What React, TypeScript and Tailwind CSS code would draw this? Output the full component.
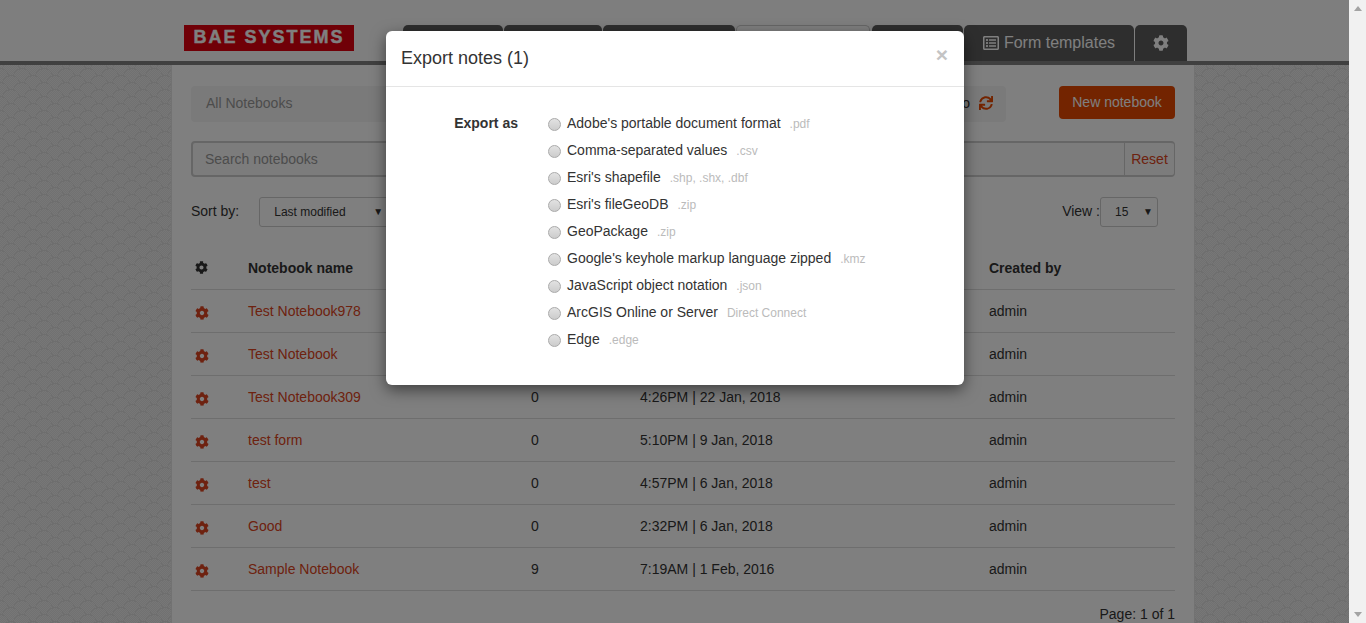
import { FaCog, FaSync, FaRegListAlt } from 'react-icons/fa'

const FORMATS = [
  { label: "Adobe's portable document format", ext: '.pdf' },
  { label: 'Comma-separated values', ext: '.csv' },
  { label: "Esri's shapefile", ext: '.shp, .shx, .dbf' },
  { label: "Esri's fileGeoDB", ext: '.zip' },
  { label: 'GeoPackage', ext: '.zip' },
  { label: "Google's keyhole markup language zipped", ext: '.kmz' },
  { label: 'JavaScript object notation', ext: '.json' },
  { label: 'ArcGIS Online or Server', ext: 'Direct Connect' },
  { label: 'Edge', ext: '.edge' },
]

const NOTEBOOKS = [
  { name: 'Test Notebook978', count: '', date: '' },
  { name: 'Test Notebook', count: '', date: '' },
  { name: 'Test Notebook309', count: '0', date: '4:26PM | 22 Jan, 2018' },
  { name: 'test form', count: '0', date: '5:10PM | 9 Jan, 2018' },
  { name: 'test', count: '0', date: '4:57PM | 6 Jan, 2018' },
  { name: 'Good', count: '0', date: '2:32PM | 6 Jan, 2018' },
  { name: 'Sample Notebook', count: '9', date: '7:19AM | 1 Feb, 2016' },
]

const TABS = ['w-[100px]', 'w-[98px]', 'w-[132px]']

function Select({ label, cls }: { label: string; cls: string }) {
  return (
    <div className={`flex h-[30px] items-center justify-between rounded-[3px] border border-[#ccc] pl-[14px] text-xs text-[#333] ${cls}`}>
      <span>{label}</span>
      <span className="text-[10px]">▼</span>
    </div>
  )
}

export default function App() {
  return (
    <div className="relative flex h-[623px] overflow-hidden font-['Liberation_Sans',Arial,sans-serif] text-sm text-[#333]">
      <div className="relative h-[623px] w-[1349px] overflow-hidden bg-[#e9e9e9] bg-[radial-gradient(circle_at_50%_100%,transparent_8px,#dcdcdc_8px,#dcdcdc_9px,transparent_9px),radial-gradient(circle_at_50%_100%,transparent_8px,#dcdcdc_8px,#dcdcdc_9px,transparent_9px),repeating-conic-gradient(#e2e2e2_0_25%,#eeeeee_0_50%)] bg-[length:22px_14px,22px_14px,2px_2px] bg-[position:0_0,11px_7px,0_0]">
        <header className="flex h-[65px] items-end border-b-4 border-[#808080] bg-[#fcfcfc] pl-[184px]">
          <div className="mb-[10px] flex h-[26px] w-[170px] items-center justify-center bg-[#e1000f] text-[18px] font-bold tracking-[2px] text-white [-webkit-text-stroke:0.4px_white]">BAE SYSTEMS</div>
          <nav className="ml-[49px] flex h-[36px] gap-[1px]">
            {TABS.map((w) => (
              <div key={w} className={`rounded-t-[5px] bg-[#5c5c5c] ${w}`} />
            ))}
            <div className="mr-[1px] w-[134px] rounded-t-[5px] border border-b-0 border-[#ccc] bg-white" />
            <div className="w-[91px] rounded-t-[5px] bg-[#5c5c5c]" />
            <div className="flex w-[170px] items-center justify-center gap-[5px] rounded-t-[5px] bg-[#5c5c5c] text-base text-white">
              <FaRegListAlt className="h-[16px] w-[16px]" />
              Form templates
            </div>
            <div className="flex w-[52px] items-center justify-center rounded-t-[5px] bg-[#5c5c5c] text-white">
              <FaCog className="h-[16px] w-[16px]" />
            </div>
          </nav>
        </header>

        <main className="ml-[171px] h-[558px] w-[1024px] border-x border-[#e4e4e4] bg-white px-[19px] pt-[21px]">
          <div className="flex items-start justify-between">
            <div className="flex h-[36px] w-[815px] items-center justify-between rounded-[4px] bg-[#f5f5f5] pb-[2px] pl-[15px] pr-[13px]">
              <span className="text-[#999]">All Notebooks</span>
              <span className="flex items-center gap-[9px]">
                <span>ago</span>
                <FaSync className="h-[14px] w-[14px] text-[#e64800]" />
              </span>
            </div>
            <button className="h-[33px] w-[116px] rounded-[4px] bg-[#e64800] pb-[2px] text-white">New notebook</button>
          </div>

          <div className="mt-[19px] flex h-[36px] items-stretch rounded-[4px] border-2 border-[#ccc] border-r-1 bg-[#f8f8f8]">
            <div className="flex flex-1 items-center pl-[12px] text-[#999]">Search notebooks</div>
            <div className="flex w-[50px] items-center justify-center border-l border-[#ccc] text-[#dc4420]">Reset</div>
          </div>

          <div className="mt-[20px] flex items-center">
            <span className="mb-[2px]">Sort by:</span>
            <Select label="Last modified" cls="ml-[20px] w-[136px] pr-[11px]" />
            <span className="mb-[2px] ml-auto">View :</span>
            <Select label="15" cls="mr-[17px] w-[58px] pr-[4px]" />
          </div>

          <table className="mt-[20px] w-full table-fixed border-collapse">
            <thead>
              <tr className="h-[42px] border-b border-[#ddd] text-left font-bold">
                <th className="w-[57px] pl-[4px]"><FaCog className="h-[13px] w-[13px] text-[#333]" /></th>
                <th className="w-[283px]">Notebook name</th>
                <th className="w-[109px]" />
                <th className="w-[349px]" />
                <th>Created by</th>
              </tr>
            </thead>
            <tbody>
              {NOTEBOOKS.map((n) => (
                <tr key={n.name} className="h-[43px] border-b border-[#ddd]">
                  <td className="pl-[4px]"><FaCog className="mt-[4px] h-[14px] w-[14px] text-[#dc4420]" /></td>
                  <td className="text-[#dc4420]">{n.name}</td>
                  <td>{n.count}</td>
                  <td>{n.date}</td>
                  <td>admin</td>
                </tr>
              ))}
            </tbody>
          </table>
          <p className="mt-[13px] text-right">Page: 1 of 1</p>
        </main>

        <div className="absolute inset-0 bg-black/50" />

        <div className="absolute left-[386px] top-[31px] w-[578px] rounded-[6px] bg-white shadow-[0_5px_15px_rgba(0,0,0,0.5)]">
          <div className="flex h-[56px] items-center justify-between border-b border-[#e5e5e5] pl-[15px] pr-[16px]">
            <h4 className="mb-[2px] text-lg text-[#333]">Export notes (1)</h4>
            <span className="-mt-[8px] text-[21px] leading-none font-bold text-[#c4c4c4]">×</span>
          </div>
          <div className="flex h-[298px] pt-[23px]">
            <div className="w-[132px] text-right leading-[27px] font-bold">Export as</div>
            <ul className="ml-[30px]">
              {FORMATS.map((f) => (
                <li key={f.label} className="flex h-[27px] items-center">
                  <span className="mt-[2px] h-[13px] w-[13px] rounded-full border border-[#aaa] bg-[linear-gradient(#e2e2e2,#cccccc)]" />
                  <span className="mb-[2px] ml-[6px]">{f.label}</span>
                  <span className="ml-[9px] text-xs text-[#bbb]">{f.ext}</span>
                </li>
              ))}
            </ul>
          </div>
        </div>
      </div>

      <div className="flex w-[17px] flex-col items-center justify-between bg-[#f1f1f1] py-[6px]">
        <span className="h-0 w-0 border-x-[4px] border-b-[5px] border-x-transparent border-b-[#a3a3a3]" />
        <span className="h-0 w-0 border-x-[4px] border-t-[5px] border-x-transparent border-t-[#a3a3a3]" />
      </div>
    </div>
  )
}
